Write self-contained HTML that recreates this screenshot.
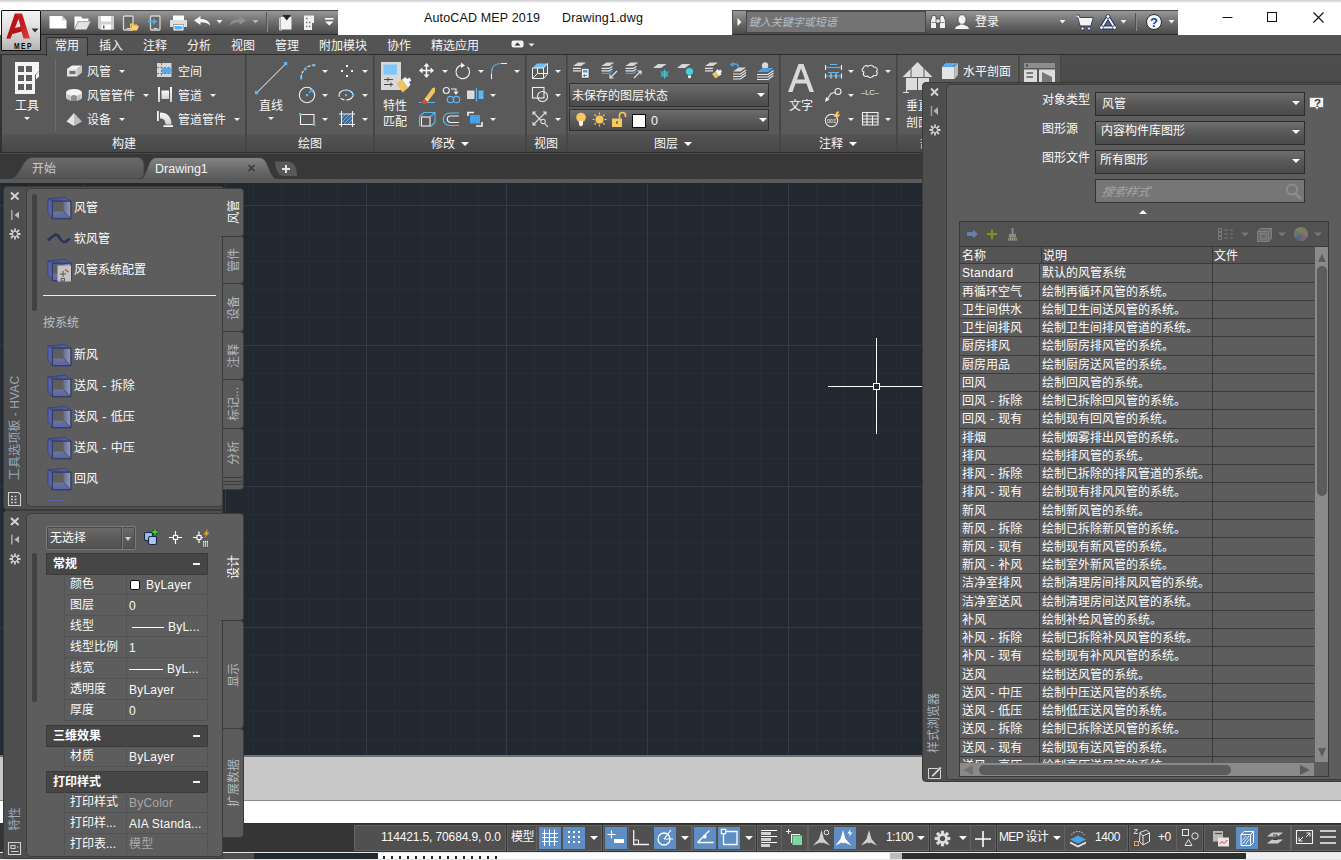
<!DOCTYPE html>
<html lang="zh-CN">
<head>
<meta charset="utf-8">
<title>AutoCAD MEP 2019 - Drawing1.dwg</title>
<style>
*{box-sizing:border-box;margin:0;padding:0}
html,body{width:1341px;height:860px;overflow:hidden;background:#fff}
body{position:relative;font-family:"Liberation Sans","Noto Sans CJK SC",sans-serif;font-size:12px;color:#f2f2f2;line-height:1}
.abs{position:absolute}
.t{position:absolute;white-space:nowrap;line-height:14px;height:14px;padding-top:1px}
svg{position:absolute;overflow:visible}
.dd{position:absolute;width:0;height:0;border-left:3px solid transparent;border-right:3px solid transparent;border-top:3px solid #e6e6e6}
.pal-out{position:absolute;background:#4e4e4e;border:1px solid #3a3a3a;border-radius:3px}
.pal-in{position:absolute;background:#5d5d5d;border:1px solid #3c3c3c;border-radius:4px}
</style>
</head>
<body>

<!-- TITLE BAR -->
<style>
#topline{left:0;top:0;width:1341px;height:3px;background:linear-gradient(#cfcfcf,#e4e4e4 50%,#fff)}
#appbtn{left:1px;top:10px;width:40px;height:41px;background:linear-gradient(#f4f4f4,#dcdcdc 50%,#b4b4b4);border:1px solid #111;border-radius:1px;z-index:5}
.qbar{position:absolute;top:10px;height:25px;background:linear-gradient(#979797,#707070 45%,#4b4b4b);border-top:1px solid #4a4a4a;border-bottom:1px solid #2c2c2c}
#title1,#title2{color:#101010;font-size:12.500px;top:10px;letter-spacing:0.150px}
</style>
<div class="abs" id="topline"></div>
<div class="qbar" style="left:41px;width:297px"></div>
<div class="qbar" style="left:732px;width:446px;border-left:1px solid #555"></div>
<div class="t" id="title1" style="left:424px">AutoCAD MEP 2019</div>
<div class="t" id="title2" style="left:562px">Drawing1.dwg</div>
<!-- window controls -->
<svg width="120" height="30" style="left:1215px;top:4px">
<path d="M7.5 13.500H17.5" stroke="#111" stroke-width="1"/>
<rect x="52.5" y="8.5" width="9" height="9" fill="none" stroke="#111" stroke-width="1"/>
<path d="M98.5 8.500L108.5 18.500M108.5 8.500L98.5 18.5" stroke="#111" stroke-width="1.1"/>
</svg>
<!-- QAT icons -->
<svg width="300" height="24" style="left:41px;top:10px">
<!-- new -->
<path d="M8.5 6H21L25.5 10.500V18.500H8.500Z" fill="#fff"/><path d="M21 6V10.500H25.500Z" fill="#d0d0d0"/>
<!-- open -->
<path d="M33.5 18.500V6.500H40L41.5 8.500H47.500V11H37Z" fill="#fff"/><path d="M33.5 19.500L37.5 11.500H49.500L45.5 19.500Z" fill="#e2e2e2"/>
<!-- save -->
<path d="M57 6H73V19.500H59L57 18Z" fill="#cfcfcf"/><rect x="60" y="6" width="10" height="5.5" fill="#fff"/><rect x="60.5" y="14.5" width="9.5" height="5" fill="#fff"/><rect x="62" y="15.5" width="1.5" height="3" fill="#555"/>
<!-- open mobile -->
<rect x="82.5" y="6" width="9.5" height="14" rx="1" fill="#646464" stroke="#d4d4d4" stroke-width="1.3"/><path d="M85.5 18.500H89.5" stroke="#d4d4d4" stroke-width="1"/>
<path d="M89 13.500H92L93 14.500H96.500V16H90.500L89 20Z" fill="#f0c050"/><path d="M89 20.500L91 16H98L96 20.500Z" fill="#f8d070"/>
<!-- save mobile -->
<rect x="109.5" y="6" width="9.5" height="14" rx="1" fill="#646464" stroke="#d4d4d4" stroke-width="1.3"/><path d="M112.5 18.500H116.5" stroke="#d4d4d4" stroke-width="1"/>
<path d="M107 10.500H112V8L116.5 11.500L112 15V12.500H107Z" fill="#4aa8ea"/>
<!-- print -->
<rect x="132" y="5.5" width="11" height="5" fill="#fff"/><path d="M129 10H146V17H143V14.500H132V17H129Z" fill="#dedede"/><rect x="132.5" y="15" width="10" height="5.5" fill="#fff"/><rect x="133.5" y="16" width="8" height="3.5" fill="#5cb0f0"/>
<!-- undo -->
<path d="M153 10.500L159.5 6V9C165 9 169 11.5 169 15.500C167 13 164 12.2 159.5 12.200V15Z" fill="#f4f4f4"/>
<path d="M175.5 10H181.500L178.5 13.500Z" fill="#f0f0f0"/>
<!-- redo -->
<path d="M205 10.500L198.5 6V9C193 9 189 11.5 189 15.500C191 13 194 12.2 198.5 12.200V15Z" fill="#8e8e8e"/>
<path d="M211.5 10H217.500L214.5 13.500Z" fill="#b4b4b4"/>
<path d="M226.5 2V22" stroke="#8a8a8a" stroke-width="1"/><path d="M225.5 2V22" stroke="#555" stroke-width="1"/>
<!-- workspace icon -->
<path d="M239.5 7H250.500V19.500H239.500Z" fill="#f2f2f2"/><path d="M238.5 8V20H241" stroke="#d0d0d0" fill="none"/><path d="M241.5 5H250L245.8 10.500Z" fill="#222"/>
<!-- prop icon -->
<path d="M263 5.500H273V13H271V20H263Z" fill="#f2f2f2"/><path d="M265 8.500H266.500M265 12.500H266.500M268 12.500H269.500M265 16.500H266.500M268 16.500H269.5" stroke="#777" stroke-width="1.3"/>
<!-- customize -->
<path d="M284 8.800H292.5" stroke="#fff" stroke-width="1.6"/><path d="M284 11.500H292.500L288.25 15.500Z" fill="#fff"/>
</svg>
<!-- infocenter -->
<div class="abs" style="left:746px;top:11px;width:180px;height:22px;background:#737373;border:1px solid #474747"></div>
<div class="t" style="left:750px;top:14px;font-size:11px;color:#b4c0cc;transform:skewX(-14deg)">键入关键字或短语</div>
<svg width="450" height="24" style="left:732px;top:10px">
<path d="M5.5 8L9.5 12L5.5 16Z" fill="#fff"/>
<!-- binoculars -->
<g fill="#f2f2f2" stroke="#3a3a3a" stroke-width="0.7"><path d="M199 9.500L200.5 5.500H203.500L204.5 9.500V18.500H198.500V11Z"/><path d="M213 9.500L211.5 5.500H208.500L207.5 9.500V18.500H213.500V11Z"/><rect x="204" y="9" width="4" height="4"/></g>
<path d="M199.5 12.500H204M208 12.500H212.5" stroke="#888" stroke-width="1"/>
<!-- user -->
<g fill="#f4f4f4" stroke="#3c3c3c" stroke-width="0.7"><path d="M222.5 19.500C222.5 16 226 15.5 228 14.500V13H232V14.500C234 15.5 237.5 16 237.5 19.500Z"/><ellipse cx="230" cy="9.5" rx="4" ry="4.8"/></g>
<path d="M327.5 10H333.500L330.5 13.500Z" fill="#f0f0f0"/>
<!-- cart -->
<path d="M344 6H346.500L349 15H358L360 8.500H347.5" fill="none" stroke="#1c2c60" stroke-width="2.6" stroke-linejoin="round"/><path d="M344 6H346.500L349 15H358L360 8.500H347.5" fill="#f4f4f4" stroke="#f4f4f4" stroke-width="1.2" stroke-linejoin="round"/>
<circle cx="350.5" cy="18.5" r="1.6" fill="#f4f4f4" stroke="#1c2c60" stroke-width="0.8"/><circle cx="357" cy="18.5" r="1.6" fill="#f4f4f4" stroke="#1c2c60" stroke-width="0.8"/>
<!-- A360 -->
<path d="M376 7L382.5 17.500H369.500Z" fill="none" stroke="#1c2c60" stroke-width="4" stroke-linejoin="round"/><path d="M376 7L382.5 17.500H369.500Z" fill="none" stroke="#f4f4f4" stroke-width="2" stroke-linejoin="round"/>
<circle cx="376" cy="6.5" r="2" fill="#f4f4f4" stroke="#1c2c60" stroke-width="0.8"/><circle cx="369.5" cy="17.5" r="2" fill="#f4f4f4" stroke="#1c2c60" stroke-width="0.8"/><circle cx="382.5" cy="17.5" r="2" fill="#f4f4f4" stroke="#1c2c60" stroke-width="0.8"/>
<path d="M388.5 10H394.500L391.5 13.500Z" fill="#f0f0f0"/>
<path d="M404.5 3V21" stroke="#8a8a8a" stroke-width="1"/><path d="M403.5 3V21" stroke="#505050" stroke-width="1"/>
<circle cx="422" cy="12" r="7.5" fill="#f8f8f8" stroke="#2a2a2a" stroke-width="1"/>
<path d="M436.5 10H442.500L439.5 13.500Z" fill="#f0f0f0"/>
</svg>
<div class="t" style="left:975px;top:14px;color:#fafafa">登录</div>
<div class="t" style="left:1150px;top:15px;color:#1c3ca8;font-weight:bold;font-size:13px;width:8px;text-align:center">?</div>
<!-- app button -->
<div class="abs" id="appbtn">
<svg width="38" height="39" style="left:0;top:0">
<defs><linearGradient id="gA" x1="0" y1="0" x2="1" y2="1"><stop offset="0" stop-color="#e02828"/><stop offset="0.5" stop-color="#c01818"/><stop offset="1" stop-color="#e04040"/></linearGradient></defs>
<path d="M13 2.500H20L28 27.500H21.500L19.5 20.500L10 23L8.5 27.500H4.500Z" fill="url(#gA)"/>
<path d="M16.5 8L13 17L18.5 15.500Z" fill="#e8e8e8"/>
<path d="M13 2.500L4.5 27.500H8.500L16.5 6Z" fill="#b01414" opacity="0.7"/>
<path d="M10 23L19.5 20.500L19 17.500L11 20Z" fill="#a01010" opacity="0.6"/>
<path d="M29.5 17.500H36.500L33 21.500Z" fill="#2a3040"/>
</svg>
<div class="t" style="left:11.5px;top:27px;color:#0a0a0a;font-weight:bold;font-size:8.4px;letter-spacing:1.9px;transform:scaleX(0.8);transform-origin:left center">MEP</div>
</div>

<!-- RIBBON -->
<style>
#tabrow{left:0;top:35px;width:1341px;height:20px;background:#545454}
#tabrow .t{top:3px;color:#f4f4f4}
#tabact{left:46px;top:37px;width:42px;height:19px;background:linear-gradient(#626262,#5a5a5a);border:1px solid #2e2e2e;border-bottom:none;border-radius:2px 2px 0 0}
#ribbon{left:0;top:54px;width:1341px;height:99px;background:linear-gradient(#4e4e4e,#454545);border-top:1px solid #2f2f2f;border-bottom:1px solid #2f2f2f;border-left:2px solid #333;overflow:hidden}
#ribbon .pn{position:absolute;top:0;height:97px;background:#5a5a5a;border-right:1px solid #444}
#ribbon .pt{position:absolute;left:0;bottom:0;width:100%;height:18px;background:linear-gradient(#545454,#474747)}
#ribbon .t{color:#f6f6f6}
#ribbon .dd{border-top-color:#f0f0f0}
#ribbon .d2{position:absolute;width:0;height:0;border-left:4px solid transparent;border-right:4px solid transparent;border-top:4px solid #fff}
#ribbon .cb{position:absolute;left:567px;width:200px;border:1px solid #303030;background:linear-gradient(#6c6c6c,#5a5a5a 50%,#4b4b4b)}
</style>
<div class="abs" id="tabrow">
<div class="t" style="left:55px">常用</div>
<div class="t" style="left:99px">插入</div>
<div class="t" style="left:143px">注释</div>
<div class="t" style="left:187px">分析</div>
<div class="t" style="left:231px">视图</div>
<div class="t" style="left:275px">管理</div>
<div class="t" style="left:319px">附加模块</div>
<div class="t" style="left:387px">协作</div>
<div class="t" style="left:431px">精选应用</div>
<svg width="30" height="21" style="left:508px;top:-1px"><rect x="3.5" y="6.5" width="12" height="7" rx="2" fill="#f2f2f2"/><path d="M6.5 11.500L9.5 8.500L12.5 11.500Z" fill="#333"/><path d="M20.5 9.500H26.500L23.5 12.500Z" fill="#f0f0f0"/></svg>
</div>
<div class="abs" id="ribbon">
<!-- coordinates inside #ribbon: x = page-2, y = page-55 -->
<div class="pn" style="left:0;width:244px"><div class="pt"></div></div>
<div class="pn" style="left:245px;width:127px"><div class="pt"></div></div>
<div class="pn" style="left:373px;width:151px"><div class="pt"></div></div>
<div class="pn" style="left:525px;width:40px"><div class="pt"></div></div>
<div class="pn" style="left:566px;width:212px"><div class="pt"></div></div>
<div class="pn" style="left:779px;width:116px"><div class="pt"></div></div>
<div class="pn" style="left:896px;width:121px"><div class="pt"></div></div>
<div class="pn" style="left:1018px;width:41px"><div class="pt"></div></div>
<!-- panel titles -->
<div class="t" style="left:110px;top:81px">构建</div>
<div class="t" style="left:296px;top:81px">绘图</div>
<div class="t" style="left:429px;top:81px">修改</div><div class="d2" style="left:459px;top:87px"></div>
<div class="t" style="left:532px;top:81px">视图</div>
<div class="t" style="left:652px;top:81px">图层</div><div class="d2" style="left:682px;top:87px"></div>
<div class="t" style="left:817px;top:81px">注释</div><div class="d2" style="left:847px;top:87px"></div>
<div class="t" style="left:918px;top:81px">剖面和立面</div>
<!-- 构建 -->
<div class="abs" style="left:53px;top:4px;width:1px;height:72px;background:#6e6e6e"></div>
<div class="t" style="left:13px;top:43px">工具</div><div class="dd" style="left:22px;top:62px"></div>
<div class="t" style="left:85px;top:9px">风管</div><div class="dd" style="left:117px;top:15px"></div>
<div class="t" style="left:85px;top:33px">风管管件</div><div class="dd" style="left:141px;top:39px"></div>
<div class="t" style="left:85px;top:57px">设备</div><div class="dd" style="left:117px;top:63px"></div>
<div class="t" style="left:176px;top:9px">空间</div>
<div class="t" style="left:176px;top:33px">管道</div><div class="dd" style="left:208px;top:39px"></div>
<div class="t" style="left:176px;top:57px">管道管件</div><div class="dd" style="left:232px;top:63px"></div>
<!-- 绘图 -->
<div class="t" style="left:257px;top:43px">直线</div><div class="dd" style="left:266px;top:62px"></div>
<div class="dd" style="left:320px;top:15px"></div><div class="dd" style="left:320px;top:39px"></div><div class="dd" style="left:320px;top:63px"></div>
<div class="dd" style="left:360px;top:15px"></div><div class="dd" style="left:360px;top:39px"></div><div class="dd" style="left:360px;top:63px"></div>
<!-- 修改 -->
<div class="t" style="left:381px;top:43px">特性</div><div class="t" style="left:381px;top:59px">匹配</div>
<div class="dd" style="left:440px;top:15px"></div><div class="dd" style="left:476px;top:15px"></div><div class="dd" style="left:512px;top:15px"></div>
<div class="dd" style="left:488px;top:39px"></div><div class="dd" style="left:488px;top:63px"></div>
<!-- 视图 -->
<div class="dd" style="left:553px;top:15px"></div><div class="dd" style="left:553px;top:39px"></div><div class="dd" style="left:553px;top:63px"></div>
<!-- 图层 -->
<div class="cb" style="top:28px;height:24px"></div>
<div class="cb" style="top:54px;height:22px"></div>
<div class="t" style="left:570px;top:33px">未保存的图层状态</div>
<div class="t" style="left:649px;top:58px;font-size:12.500px">0</div>
<div class="d2" style="left:755px;top:38px"></div><div class="d2" style="left:757px;top:63px"></div>
<!-- 注释 -->
<div class="t" style="left:787px;top:43px">文字</div>
<div class="dd" style="left:846px;top:15px"></div><div class="dd" style="left:846px;top:39px"></div><div class="dd" style="left:846px;top:63px"></div>
<div class="dd" style="left:883px;top:15px"></div><div class="dd" style="left:883px;top:63px"></div>
<div class="t" style="left:859px;top:30px;font-size:7.5px;letter-spacing:0;color:#eee;width:18px;text-align:center">–LC–</div>
<!-- 剖面 -->
<div class="t" style="left:904px;top:43px">垂直</div><div class="t" style="left:904px;top:60px">剖面</div>
<div class="t" style="left:961px;top:9px">水平剖面</div>
<svg width="1100" height="80" style="left:0;top:0">
<defs>
<linearGradient id="gW" x1="0" y1="0" x2="0" y2="1"><stop offset="0" stop-color="#fafafa"/><stop offset="1" stop-color="#cfcfcf"/></linearGradient>
</defs>
<g transform="translate(-2 -55)">
<!-- ===== 构建 ===== -->
<path d="M15 62H39V71L35 75V94H15Z" fill="#f4f4f4"/><path d="M36 74.500L39 71.500V76.500L36 79.500Z" fill="#f4f4f4"/>
<path d="M18 66h6v6h-6zM26 66h6v6h-6zM18 75h6v6h-6zM26 75h6v6h-6zM18 84h6v6h-6zM26 84h6v6h-6z" fill="#5c5c5c"/>
<!-- duct -->
<path d="M67 69L72 65.500H82L77 69Z" fill="#f2f2f2"/><path d="M77 69L82 65.500V72.500L77 76.500Z" fill="#c4c4c4"/><rect x="67" y="69" width="10" height="7.5" fill="#dedede"/><rect x="69.5" y="71" width="6" height="3" fill="#6e6e6e"/>
<!-- duct fitting -->
<path d="M66 92.500V97.500A8 3.5 0 0 0 82 97.500V92.500Z" fill="#cdcdcd"/><ellipse cx="74" cy="92.5" rx="8" ry="3.5" fill="#f4f4f4"/>
<path d="M71 101V97.500A3 2.5 0 0 1 77 97.500V101Z" fill="#8c8c8c"/><path d="M69 94.500V100M79 94.500V100" stroke="#aaa" stroke-width="0.8"/>
<!-- equipment -->
<path d="M74 113L66.5 121.500L74 126Z" fill="#e4e4e4"/><path d="M74 113L82 121.500L74 126Z" fill="#bcbcbc"/>
<!-- space -->
<rect x="157" y="63" width="14.5" height="14" fill="#d6d6d6"/><rect x="162" y="68" width="9.5" height="5.5" fill="#5aa8e6"/>
<path d="M161.5 63V77M157 67.500H171.500M157 73.500H171.5" stroke="#2a8ae0" stroke-width="1" stroke-dasharray="2 1.5" fill="none"/>
<!-- pipe -->
<rect x="158" y="87" width="2" height="15" fill="url(#gW)"/><rect x="170" y="87" width="2" height="15" fill="url(#gW)"/><rect x="161.5" y="90.5" width="7.5" height="8.5" fill="url(#gW)"/>
<!-- pipe fitting -->
<rect x="157" y="111" width="1.8" height="10" fill="#f4f4f4"/><rect x="163.5" y="125.2" width="9.5" height="1.8" fill="#f4f4f4"/>
<path d="M160 112.500C167.5 112.5 171.5 117 171.5 124.500H165.500C165.5 120.5 163.5 118.5 160 118.500Z" fill="url(#gW)"/>
<!-- ===== 绘图 ===== -->
<path d="M257.5 92L285 64.5" stroke="#f4f4f4" stroke-width="1"/><rect x="255" y="91" width="3.2" height="3.2" fill="#5cb8f4"/><rect x="284" y="62" width="3.2" height="3.2" fill="#5cb8f4"/>
<path d="M301 78C301.5 71 306 65.5 314 65" fill="none" stroke="#f0f0f0" stroke-width="1.1" stroke-dasharray="3 1.5"/>
<rect x="300" y="77" width="2.4" height="2.4" fill="#5cb8f4"/><rect x="304" y="68" width="2.4" height="2.4" fill="#5cb8f4"/><rect x="313" y="64" width="2.4" height="2.4" fill="#5cb8f4"/>
<circle cx="307" cy="95" r="7.7" fill="none" stroke="#f0f0f0" stroke-width="1.1"/><rect x="306" y="94" width="2.2" height="2.2" fill="#5cb8f4"/><path d="M309 93L312.5 89.500M309.5 89.500H312.500V92.5" stroke="#5cb8f4" stroke-width="1.1" fill="none"/>
<path d="M300.5 114.500H314V124.500H300.500Z" fill="none" stroke="#f0f0f0" stroke-width="1.1"/><rect x="299" y="113" width="2.4" height="2.4" fill="#5cb8f4"/><rect x="313" y="123.5" width="2.4" height="2.4" fill="#5cb8f4"/>
<path d="M346 65h2v2h-2zM341 70h2v2h-2zM351 70h2v2h-2zM346 75h2v2h-2z" fill="#f4f4f4"/>
<ellipse cx="346" cy="95" rx="7" ry="5" fill="none" stroke="#f0f0f0" stroke-width="1.1" stroke-dasharray="9 2 4 2 30"/><rect x="345" y="89" width="2.2" height="2.2" fill="#5cb8f4"/><rect x="345" y="94" width="2.2" height="2.2" fill="#5cb8f4"/><rect x="352" y="94" width="2.2" height="2.2" fill="#5cb8f4"/>
<rect x="342" y="114" width="10" height="10" fill="#3c6c94"/><path d="M342 118L346 114M342 122L350 114M344 124L352 116M348 124L352 120" stroke="#5cb8f4" stroke-width="1"/>
<path d="M341.5 111V127M352.5 111V127M339 114H355M339 124.500H355" stroke="#f0f0f0" stroke-width="1.1"/>
<!-- ===== 修改 ===== -->
<rect x="381" y="62" width="20" height="28" fill="#d8d8d8"/><rect x="383.5" y="64.5" width="13.5" height="10" fill="#7cc6fa"/>
<path d="M384 79.500H393M384 84.500H393M388 77.500V81.500M391 82.500V86.5" stroke="#4a4a4a" stroke-width="1.1"/>
<path d="M396.5 83L402 79.500L408 88L402.5 92.500Z" fill="#f0c45c"/><path d="M402 79.500L405.5 77L407 79L409.5 77.500L411.5 80.500L409 82L410.5 84.500L408 88Z" fill="#f4f4f4"/>
<!-- move -->
<path d="M426.5 63L429.5 66.500H427.300V69.700H430.500V67.500L434 70.500L430.5 73.500V71.300H427.300V74.500H429.500L426.5 78L423.5 74.500H425.700V71.300H422.500V73.500L419 70.500L422.5 67.500V69.700H425.700V66.500H423.500Z" fill="#f6f6f6"/>
<!-- rotate -->
<path d="M467.5 67A6.8 6.8 0 1 1 461.5 65.2" fill="none" stroke="#f2f2f2" stroke-width="1.2"/><path d="M461 62.500L465 65.500L461 68Z" fill="#f2f2f2"/>
<!-- fillet -->
<path d="M491.5 73C491.5 67 495 63.5 500.5 63.5" fill="none" stroke="#5cb8f4" stroke-width="1.2"/><path d="M491.5 73.500V79M501 63.500H507" stroke="#f0f0f0" stroke-width="1.1"/>
<!-- erase -->
<path d="M424.5 99L432.5 88L435 87.500L435 92L427.5 102Z" fill="#f0c45c"/><path d="M424.5 99L427.5 102L425.5 103.500A2.2 2.2 0 0 1 422.5 100.500Z" fill="#e84848"/><path d="M425.3 98L428.3 101" stroke="#fff" stroke-width="1"/>
<path d="M419 102.500H421.500M427 102.500H435" stroke="#5cb8f4" stroke-width="1"/>
<!-- copy -->
<circle cx="446.3" cy="90.5" r="3" fill="none" stroke="#f0f0f0" stroke-width="1.1"/><path d="M451 89H456V93.500M454 91.500L456 94L458 91.5" fill="none" stroke="#f0f0f0" stroke-width="1.1"/>
<circle cx="450.5" cy="99.5" r="3.2" fill="none" stroke="#5cb8f4" stroke-width="1.2"/><circle cx="456.5" cy="99.5" r="3.2" fill="none" stroke="#5cb8f4" stroke-width="1.2"/>
<!-- mirror -->
<rect x="467" y="90.5" width="7.5" height="8.5" fill="#dcdcdc"/><path d="M476.5 88V101.5" stroke="#5cb8f4" stroke-width="1.1"/><rect x="478.5" y="90.5" width="5" height="8.5" fill="#5cb8f4"/>
<!-- 3d box -->
<path d="M419.5 116.500L424 112.500H435V122.500L430.5 126.500M430.5 116.500L435 112.500M419.5 116.500V126.5" fill="none" stroke="#5cb8f4" stroke-width="1.1"/><rect x="421.5" y="117" width="8.5" height="9" fill="none" stroke="#f0f0f0" stroke-width="1.1"/>
<!-- offset -->
<path d="M459 113H449.500A6 6 0 0 0 449.5 125.500H459" fill="none" stroke="#5cb8f4" stroke-width="1.2"/><path d="M459 116H450.500A3.2 3.2 0 0 0 450.5 122.500H459" fill="none" stroke="#f0f0f0" stroke-width="1.2"/>
<!-- draw order -->
<rect x="470" y="115" width="10" height="8.5" fill="#4aa0e4"/><path d="M468 116V112.500H474M482 122V126H476" fill="none" stroke="#f4f4f4" stroke-width="1.6"/>
<!-- ===== 视图 ===== -->
<path d="M532.5 68L537 63.500H547.500L543.5 68Z" fill="#6cc0f8"/><path d="M532.5 68H543.500V78.500H532.500ZM543.5 68L547.5 63.500V74L543.5 78.500M532.5 78.500L537.5 73.500H547M537.5 73.500V68" fill="none" stroke="#f0f0f0" stroke-width="1"/>
<rect x="532.5" y="87.5" width="11.5" height="10.5" fill="none" stroke="#f0f0f0" stroke-width="1.1"/><circle cx="542.5" cy="96.5" r="5" fill="none" stroke="#f0f0f0" stroke-width="1.1"/>
<path d="M533 112L541 120.500M546 112L533 125" stroke="#d8d8d8" stroke-width="1.2"/><path d="M532.5 111.500H536.500L532.5 115.500ZM546.5 111.500H542.500L546.5 115.500ZM532.5 125.500H536.500L532.5 121.500Z" fill="#d8d8d8"/><circle cx="543" cy="121.5" r="2.3" fill="none" stroke="#f4f4f4" stroke-width="1"/><path d="M544.7 123.500L548 127" stroke="#e0c8a0" stroke-width="1.2"/>
<!-- ===== 图层 icons ===== -->
<g id="lyr3"><path d="M0 3.500L5 0H13L8 3.500Z" fill="#d6d6d6"/><path d="M0 6H8M0 8.500H8" stroke="#e8e8e8" stroke-width="1.2"/></g>
<use href="#lyr3" x="573" y="62.4"/><rect x="581.5" y="68.5" width="7.5" height="9.5" fill="#f2f2f2" stroke="#444" stroke-width="0.6"/><rect x="583" y="70" width="4.5" height="2.5" fill="#4aa0e4"/><path d="M583.5 75.500H587M583.5 75.500L585 74.300M583.5 75.500L585 76.7" stroke="#444" stroke-width="0.7" fill="none"/>
<g id="lyr4"><path d="M0 3.500L5 0H13L8 3.500Z" fill="#d6d6d6"/><path d="M0 6L8 6L11 3.800M0 8.500H8L11 6.3" stroke="#e8e8e8" stroke-width="1.1" fill="none"/><path d="M0 11H8L11 8.8" stroke="#4aa0e4" stroke-width="1.2" fill="none"/></g>
<use href="#lyr4" x="601.4" y="62.4"/><path d="M617 71L610 78M610 74.500V78H613.5" stroke="#e4e4e4" stroke-width="1.2" fill="none"/>
<use href="#lyr4" x="625.4" y="62.4"/><path d="M634 78L641 71M641 74.500V71H637.5" stroke="#e4e4e4" stroke-width="1.2" fill="none"/>
<path d="M653 68L658 64H666.500L661 68Z" fill="#d6d6d6"/><g stroke="#40c8d8" stroke-width="1" fill="none"><path d="M664.5 69.500V78.500M660.6 71.700L668.4 76.300M660.6 76.300L668.4 71.7"/><circle cx="664.5" cy="74" r="2.7"/></g>
<path d="M677 68L682 64H690.500L685 68Z" fill="#d6d6d6"/><circle cx="689.5" cy="71.5" r="3.6" fill="#48d0dc"/><path d="M688 75.500H691V77.500L689.5 78.500L688 77.500Z" fill="#f4f4f4"/>
<use href="#lyr3" x="705" y="62.4"/><path d="M712 74L715.5 71.500L719 76L715.5 78.500Z" fill="#f0c45c"/><path d="M715.5 71.500L717.5 69L719 70.500L720.5 69.500L722 72L720.5 73L721.5 74.500L719 76Z" fill="#f4f4f4"/>
<path d="M733 71.500L738.5 67.500H746L740.5 71.500Z" fill="#d6d6d6"/><path d="M733 74H740.500L746 70M733 76.500H740.500L746 72.500M733 79H740.500L746 75" stroke="#e8e8e8" stroke-width="1.1" fill="none"/><path d="M738.5 67.500C738.5 64.5 736 63.5 733 64" fill="none" stroke="#4aa0e4" stroke-width="1.6"/><path d="M729.5 64.500L733.5 62V67Z" fill="#4aa0e4"/>
<circle cx="765" cy="65.5" r="3.2" fill="#d8d8d8"/><path d="M757 72L762.5 68H773.500L768 72Z" fill="#4aa0e4"/><path d="M757 74.500H768L773.5 70.500M757 77H768L773.5 73M757 79.500H768L773.5 75.5" stroke="#e8e8e8" stroke-width="1.1" fill="none"/>
<!-- layer combo icons -->
<circle cx="581" cy="117.5" r="4.8" fill="#f8c860"/><path d="M579 121H583V125L581 126.500L579 125Z" fill="#f4f4f4"/>
<circle cx="599.5" cy="119.5" r="4" fill="#f8c860"/><path d="M599.5 112.500V114.500M599.5 124.500V126.500M592.5 119.500H594.500M604.5 119.500H606.500M594.5 114.500L596 116M603 123L604.5 124.500M594.5 124.500L596 123M603 116L604.5 114.5" stroke="#f8c860" stroke-width="1.1"/>
<rect x="612" y="118.5" width="10" height="8.5" fill="#f8c860"/><path d="M619.5 118.500V115.500A3 3 0 0 1 625.5 115.500V117" fill="none" stroke="#f8c860" stroke-width="1.6"/><rect x="616.3" y="121" width="1.4" height="3" fill="#5a5a5a"/>
<rect x="632.5" y="114.5" width="13" height="13" fill="#fff" stroke="#0a0a0a" stroke-width="1"/>
<!-- ===== 注释 ===== -->
<path d="M798.5 64H803.500L814 92H809.500L806.5 83.500H795.500L792.5 92H788ZM801 68.500L797 79.500H805Z" fill="#d8d8d8"/>
<path d="M825.5 65V70M841.5 65V70M825.5 73.500V78.500M841.5 73.500V78.500M831 73.500V78.500M836 73.500V78.5" stroke="#f0f0f0" stroke-width="1.1"/><path d="M826 67.500H841M826 76H841M830 64.500H837M828 72.500H839" stroke="#5cb8f4" stroke-width="1.1"/>
<circle cx="838" cy="91.5" r="3" fill="none" stroke="#f0f0f0" stroke-width="1.1"/><path d="M835 92.500L831 93.500L826.5 100.5" fill="none" stroke="#f0f0f0" stroke-width="1.1"/><path d="M825 102L826 97L829.5 99.500Z" fill="#f0f0f0"/>
<circle cx="831.5" cy="120.5" r="6.2" fill="none" stroke="#f0f0f0" stroke-width="1.1"/><text x="831.6" y="122.6" font-size="5.6" text-anchor="middle" fill="#f0f0f0" font-family="Liberation Sans, sans-serif">001</text><path d="M837 111.500L833.5 116.500H836.500L835 120L840.5 114.500H837.500L839.5 111.500Z" fill="#f8c860"/>
<path d="M864 72C861.5 71.5 861.5 68.5 863.5 68C863.5 65.5 867 65 868 66.500C869.5 64.5 873 65 873.5 67C876.5 66.5 878.5 69.5 876.5 71.500C878.5 73.5 876.5 76.5 873.5 75.500C872.5 78 868.5 78 867.5 76C865 77.5 862 75 864 72Z" fill="none" stroke="#f0f0f0" stroke-width="1.1"/>
<path d="M862.5 112.500H878V125H862.500ZM862.5 116H878M862.5 119H878M862.5 122H878M867 112.500V125M872.5 116V125" fill="none" stroke="#f0f0f0" stroke-width="1.1"/>
<!-- ===== 剖面 ===== -->
<path d="M917.5 62L932.5 77H902.500Z" fill="#dcdcdc"/><rect x="906" y="77" width="23" height="13" fill="#dcdcdc"/><path d="M911 68V77M924 68V77M917.5 77V90M906 77.500H929" stroke="#5a5a5a" stroke-width="1"/><path d="M906.5 90V93M903 92.500H909" stroke="#dcdcdc" stroke-width="1.2"/>
<path d="M942 67L946 63H958L954.5 67Z" fill="#4aa0e4"/><path d="M943.5 66L946.5 63.500M947 66L950 63.500M950.5 66L953.5 63.5" stroke="#9cd0f8" stroke-width="0.8"/><rect x="942" y="67" width="12.5" height="12" fill="#e4e4e4"/><path d="M954.5 67L958 63V75L954.5 79Z" fill="#bdbdbd"/>
<rect x="1024" y="63" width="31" height="5" fill="#8e8e8e"/><rect x="1026" y="64.5" width="2" height="2" fill="#444"/><rect x="1024" y="69.5" width="13" height="14" fill="#dcdcdc"/><path d="M1026.5 73H1033M1026.5 77H1033" stroke="#5a5a5a" stroke-width="1.3"/><path d="M1039 69.500H1055V84H1039Z" fill="#dcdcdc"/><path d="M1042 72L1052 77V84H1042Z" fill="#777"/>
</g>
</svg>

</div>
<div class="abs" id="tabact"></div>
<div class="t" style="left:55px;top:38px;color:#fafafa">常用</div>

<!-- DOCUMENT TABS -->
<style>
#doctabs{left:0;top:153px;width:1341px;height:30px;background:#383838}
#doctabs .bar{position:absolute;left:0;top:26px;width:1341px;height:4px;background:#595959}
</style>
<div class="abs" id="doctabs">
<div class="abs" style="left:0;top:0;width:1341px;height:1px;background:#494949"></div>
<svg width="320" height="30" style="left:0;top:0">
<defs>
<linearGradient id="gtab1" x1="0" y1="0" x2="0" y2="1"><stop offset="0" stop-color="#6a6a6a"/><stop offset="1" stop-color="#545454"/></linearGradient>
<linearGradient id="gtab2" x1="0" y1="0" x2="0" y2="1"><stop offset="0" stop-color="#858585"/><stop offset="0.5" stop-color="#6c6c6c"/><stop offset="1" stop-color="#595959"/></linearGradient>
</defs>
<path d="M10 26C20 26 22 4.5 32 4.5H137C143 4.5 144 9 144 14V26Z" fill="url(#gtab1)" stroke="#474747" stroke-width="1"/>
<path d="M138 26.5C148 26.5 146 4.5 156 4.5H260C270 4.5 268 26.5 280 26.5Z" fill="url(#gtab2)" stroke="#3c3c3c" stroke-width="1.2"/>
<path d="M275 8.5H288C295 8.5 297 17 297 23H284C277 23 275 14 275 8.5Z" fill="#595959"/>
<path d="M282 16H290M286 12V20" stroke="#e4e4e4" stroke-width="2" fill="none"/>
<path d="M248.5 12L254.5 18M254.5 12L248.5 18" stroke="#3a3a3a" stroke-width="1.6" fill="none"/>
</svg>
<div class="bar"></div>
<div class="t" style="left:32px;top:8px;color:#c4ccd4">开始</div>
<div class="t" style="left:155px;top:8px;color:#f4f4f4;font-size:12.5px">Drawing1</div>
</div>

<!-- DRAWING AREA -->
<style>
#draw{left:0;top:183px;width:1341px;height:573px;background:#212830;overflow:hidden}
#band1{left:0;top:755px;width:1341px;height:46px;background:#c8c8c8;border-top:2px solid #707070;border-bottom:1px solid #8c8c8c}
#band2{left:0;top:801px;width:1341px;height:22px;background:#fff}
</style>
<div class="abs" id="draw">
<svg width="1341" height="573" style="left:0;top:0">
<path d="M0.5 0V573M28.5 0V573M56.5 0V573M112.5 0V573M140.5 0V573M168.5 0V573M197.5 0V573M253.5 0V573M281.5 0V573M309.5 0V573M337.5 0V573M394.5 0V573M422.5 0V573M450.5 0V573M478.5 0V573M534.5 0V573M563.5 0V573M591.5 0V573M619.5 0V573M675.5 0V573M703.5 0V573M732.5 0V573M760.5 0V573M816.5 0V573M844.5 0V573M872.5 0V573M901.5 0V573M957.5 0V573M985.5 0V573M1013.5 0V573M1041.5 0V573M1098.5 0V573M1126.5 0V573M1154.5 0V573M1182.5 0V573M1238.5 0V573M1267.5 0V573M1295.5 0V573M1323.5 0V573M0 50.5H1341M0 78.5H1341M0 106.5H1341M0 134.5H1341M0 190.5H1341M0 219.5H1341M0 247.5H1341M0 275.5H1341M0 331.5H1341M0 359.5H1341M0 388.5H1341M0 416.5H1341M0 472.5H1341M0 500.5H1341M0 528.5H1341M0 557.5H1341" stroke="#262d37" stroke-width="1" fill="none"/>
<path d="M84.5 0V573M225.5 0V573M366.5 0V573M506.5 0V573M647.5 0V573M788.5 0V573M929.5 0V573M1070.5 0V573M1210.5 0V573M0 22.5H1341M0 162.5H1341M0 303.5H1341M0 444.5H1341" stroke="#333a49" stroke-width="1" fill="none"/>
<path d="M828 203.5H922M876.5 155V251" stroke="#ffffff" stroke-width="1" fill="none"/>
<rect x="873.5" y="200.5" width="6" height="6" fill="#212830" stroke="#ffffff" stroke-width="1"/>
</svg>
</div>
<div class="abs" id="band1"></div>
<div class="abs" id="band2"></div>

<!-- STATUS BAR -->
<style>
#status{left:0;top:823px;width:1341px;height:29px;background:#353535;border-top:1px solid #2e2e2e}
#status .fr{position:absolute;top:1px;height:26px;background:#505050;border:1px solid #636363}
#status .bl{position:absolute;top:3px;width:22px;height:22px;background:#5e8ec4}
#status .sp{position:absolute;top:2px;width:1px;height:24px;background:#636363}
#status .t{top:5px;color:#fafafa}
#status .dd{top:12px;border-left-width:4px;border-right-width:4px;border-top-width:4px;border-top-color:#fff}
#under{left:0;top:852px;width:1341px;height:8px;background:#e6e6e6}
</style>
<div class="abs" id="status">
<div class="fr" style="left:354px;width:152px"></div>
<div class="fr" style="left:507px;width:95px"></div>
<div class="fr" style="left:603px;width:89px"></div>
<div class="fr" style="left:692px;width:64px"></div>
<div class="fr" style="left:757px;width:51px"></div>
<div class="fr" style="left:808px;width:121px"></div>
<div class="fr" style="left:930px;width:66px"></div>
<div class="fr" style="left:997px;width:131px"></div>
<div class="fr" style="left:1129px;width:74px"></div>
<div class="fr" style="left:1204px;width:87px"></div>
<div class="fr" style="left:1291px;width:52px"></div>
<div class="sp" style="left:536px"></div>
<div class="sp" style="left:628px"></div>
<div class="sp" style="left:781px"></div>
<div class="sp" style="left:970px"></div>
<div class="sp" style="left:1064px"></div>
<div class="sp" style="left:1176px"></div>
<div class="bl" style="left:539px"></div>
<div class="bl" style="left:563px"></div>
<div class="bl" style="left:605px"></div>
<div class="bl" style="left:654px"></div>
<div class="bl" style="left:694px"></div>
<div class="bl" style="left:718px"></div>
<div class="bl" style="left:834px"></div>
<div class="bl" style="left:1236px"></div>
<div class="t" style="left:381px;letter-spacing:-0.13px">114421.5, 70684.9, 0.0</div>
<div class="t" style="left:511px;letter-spacing:-0.5px">模型</div>
<div class="t" style="left:886px;letter-spacing:-0.6px">1:100</div>
<div class="t" style="left:999px;letter-spacing:-0.65px">MEP 设计</div>
<div class="t" style="left:1095px;letter-spacing:-0.4px">1400</div>
<div class="t" style="left:1158px;letter-spacing:-0.4px">+0</div>
<div class="dd" style="left:590px"></div>
<div class="dd" style="left:681px"></div>
<div class="dd" style="left:745px"></div>
<div class="dd" style="left:917px"></div>
<div class="dd" style="left:959px"></div>
<div class="dd" style="left:1053px"></div>
<svg width="1341" height="30" style="left:0;top:-2px">
<g fill="none" stroke="#fff" stroke-width="1.3">
<!-- grid -->
<path d="M544.5 7.5V24M549.5 7.5V24M554.5 7.5V24M542 11.500H558M542 15.500H558M542 19.500H558" stroke-width="1.1"/>
<!-- dyn input -->
<path d="M607.5 12.5H615.5M611.5 8.5V16.5" stroke-width="1.2"/>
<!-- ortho -->
<path d="M633.7 8V22.5H649" stroke="#f0f0f0"/><path d="M634 18H638.5V22.5" stroke="#f0f0f0" stroke-width="1"/>
<!-- polar -->
<circle cx="664" cy="17" r="6"/><path d="M664 17L671 8M664 17H673" stroke-width="1.2"/>
<!-- otrack -->
<path d="M697.5 20.5L709.5 8.5M697.5 20.5H713.5"/>
<!-- osnap -->
<path d="M723.5 9.5H737V22.5H723.5Z"/>
<!-- plus -->
<path d="M975 17H991M983 9V25" stroke-width="1.6"/>
<!-- fullscreen -->
<path d="M1296.5 8.5H1312.5V21.5H1296.5Z" stroke="#f0f0f0" stroke-width="1.1"/><path d="M1299 19L1303 15M1299 15.5V19H1302.5M1310 11L1306 15M1310 14.5V11H1306.5" stroke="#f0f0f0" stroke-width="1"/>
<!-- hamburger -->
<path d="M1320 9H1336M1320 15H1336M1320 21H1336" stroke-width="1.6" stroke="#f4f4f4"/>
</g>
<g fill="#fff">
<rect x="703" y="13" width="3.4" height="3.4"/>
<rect x="721.3" y="7.3" width="4.4" height="4.4" fill="#5e8ec4" stroke="#fff" stroke-width="1.1"/>
<rect x="614" y="17" width="10" height="4"/>
<!-- snap dots -->
<path d="M568 9h2v2h-2zM573 9h2v2h-2zM578 9h2v2h-2zM568 14h2v2h-2zM573 14h2v2h-2zM578 14h2v2h-2zM568 19h2v2h-2zM573 19h2v2h-2zM578 19h2v2h-2z"/>
</g>
<!-- lineweight -->
<path d="M761 8.5H777M761 14.5H777M761 20.5H777" stroke="#fff" stroke-width="1"/>
<path d="M761 10H771V13H761zM761 16H771V19H761zM761 22H770V25H761z" fill="#d2d2d2"/>
<!-- selection cycling -->
<path d="M786 9.5H791M788.5 7V12M791 12.5H800M791.5 12V21" stroke="#f0f0f0" stroke-width="1" fill="none"/>
<rect x="792.5" y="13.5" width="9.5" height="9.5" fill="#7fd6a0"/>
<!-- annotation scale icons -->
<g fill="#cfcfcf">
<path d="M821.5 8L824 17L830 23.5L822.8 20.5L821.5 21.500L820.2 20.500L813 23.500L819 17Z"/>
<path d="M869 8L871.5 17L877 23.500L870.3 20.500L869 21.500L867.7 20.500L861 23.500L866.5 17Z"/>
</g>
<circle cx="826.5" cy="10.5" r="2.3" fill="none" stroke="#e8e8e8" stroke-width="1"/>
<path d="M843 8L845.5 17L851.5 23.500L844.3 20.500L843 21.500L841.7 20.500L835.5 23.500L840.5 17Z" fill="#fff"/>
<path d="M850.5 7L847.5 11.500H850L848.5 15L852.5 10.500H850Z" fill="#fff"/>
<!-- gear -->
<g transform="translate(942.5 16.5)" fill="#dcdcdc">
<circle r="5.3" /><g id="teeth"><rect x="-1.6" y="-7.8" width="3.2" height="15.6"/><rect x="-7.8" y="-1.6" width="15.6" height="3.2"/></g><g transform="rotate(45)"><rect x="-1.6" y="-7.8" width="3.2" height="15.6"/><rect x="-7.8" y="-1.6" width="15.6" height="3.2"/></g><circle r="2.6" fill="#505050"/>
</g>
<!-- layer key icon -->
<path d="M1070 17.500L1078 13.500L1086 17.500L1078 21.500Z" fill="#4aa3e6"/>
<path d="M1070 19.500L1078 23.500L1086 19.500V21.500L1078 25.500L1070 21.500Z" fill="#e6e6e6"/>
<path d="M1071.5 13A7 5.5 0 0 1 1084.5 13" fill="none" stroke="#e0e0e0" stroke-width="1" stroke-dasharray="1.5 1.3"/>
<!-- elevation icon -->
<path d="M1140 10.500L1146.5 8L1149.5 11V19.500L1143 23L1139.5 19.500Z M1139.8 10.800L1143 13.800L1149.5 11M1143 13.800V23" fill="none" stroke="#e4e4e4" stroke-width="1"/>
<path d="M1134 7.500H1137.500L1134 11.500H1137.8" fill="none" stroke="#e4e4e4" stroke-width="0.9"/>
<rect x="1134.5" y="19.5" width="4" height="4" fill="none" stroke="#f0a060" stroke-width="1"/>
<!-- shapes icon -->
<rect x="1182.5" y="7.5" width="6" height="6" fill="none" stroke="#e6e6e6" stroke-width="1"/>
<circle cx="1195" cy="14" r="3.2" fill="none" stroke="#e6e6e6" stroke-width="1"/>
<path d="M1188.5 17.500L1192 23.500H1185Z" fill="none" stroke="#e6e6e6" stroke-width="1"/>
<!-- isolate icon group -->
<path d="M1213 9H1223V19.500H1213Z" fill="#b9b9b9"/><path d="M1215 11.500H1222" stroke="#505050" stroke-width="1.2"/>
<rect x="1218" y="15.5" width="11" height="9" fill="#e6e6e6"/><path d="M1219.5 22L1222 19.500L1224 21.500L1227.5 18" stroke="#e03030" stroke-width="1" fill="none"/>
<!-- 3d hatch cube -->
<path d="M1241 12.500H1250.500V23.500H1241ZM1241 12.500L1244 9.500H1253.500L1250.5 12.500M1253.5 9.500V20.500L1250.5 23.5" fill="none" stroke="#fff" stroke-width="1"/>
<path d="M1242.5 22L1249 14M1242.5 18.500L1246 14M1245.5 22L1249.5 17" stroke="#fff" stroke-width="0.8"/>
<!-- surface hatch -->
<path d="M1267 14.500L1272 10.500H1283L1278 14.500ZM1267 21.500L1272 17.500H1283L1278 21.500Z" fill="#c9c9c9"/>
<path d="M1273 13H1277V17.500H1273" fill="none" stroke="#3a3a3a" stroke-width="1"/>
</svg>
</div>
<div class="abs" id="under">
<div class="abs" style="left:0;top:1px;width:254px;height:6px;background:#4e4e4e"></div>
<div class="abs" style="left:254px;top:1px;width:124px;height:6px;background:#222830"></div>
<div class="abs" style="left:378px;top:1px;width:512px;height:6px;background:#fff"></div>
<div class="abs" style="left:383px;top:4px;width:118px;height:3px;background:repeating-linear-gradient(90deg,#222 0 2px,#fff 2px 8px)"></div>
<div class="abs" style="left:890px;top:1px;width:12px;height:6px;background:#bdbdbd"></div>
<div class="abs" style="left:902px;top:1px;width:344px;height:6px;background:#2e2e2e"></div>
<div class="abs" style="left:1246px;top:1px;width:95px;height:6px;background:#f0f0f0"></div>
</div>

<!-- TOOL PALETTE -->
<style>
#tp .vt{position:absolute;left:210px;width:48px;height:14px;line-height:14px;text-align:center;transform:rotate(-90deg);transform-origin:center;white-space:nowrap;color:#aeb8c2}
#tp .tab{position:absolute;left:221px;width:23px;background:#5b5b5b;border:1px solid #3c3c3c;border-left-color:#3c3c3c;border-radius:0 4px 4px 0}
#tp .it{color:#fcfcfc;left:74px}
</style>
<div id="tp">
<div class="pal-out" style="left:3px;top:186px;width:220px;height:324px;border-radius:4px 0 0 4px"></div>
<!-- stacked tab edges -->
<div class="tab" style="top:440px;height:50px"></div>
<div class="tab" style="top:440px;height:45px"></div>
<div class="tab" style="top:440px;height:42px"></div>
<div class="tab" style="top:428px;height:50px"></div>
<div class="tab" style="top:379px;height:50px"></div>
<div class="tab" style="top:331px;height:49px"></div>
<div class="tab" style="top:283px;height:49px"></div>
<div class="tab" style="top:235px;height:49px"></div>
<div class="pal-in" style="left:26px;top:188px;width:197px;height:319px;border-radius:5px 0 4px 5px"></div>
<div class="abs" style="left:221px;top:188px;width:23px;height:49px;background:#5d5d5d;border:1px solid #3c3c3c;border-left:none;border-radius:0 4px 4px 0"></div>
<div class="abs" style="left:220px;top:189px;width:4px;height:47px;background:#5d5d5d"></div>
<div class="vt" style="top:205px;color:#fcfcfc">风管</div>
<div class="vt" style="top:253px">管件</div>
<div class="vt" style="top:301px">设备</div>
<div class="vt" style="top:349px">注释</div>
<div class="vt" style="top:397px">标记...</div>
<div class="vt" style="top:446px">分析</div>
<!-- left strip -->
<svg width="24" height="324" style="left:3px;top:186px">
<path d="M8 6.500L15.5 13.500M15.5 6.500L8 13.5" stroke="#d2d2d2" stroke-width="2" fill="none"/>
<path d="M8.8 24V34" stroke="#a4a4a4" stroke-width="1.6"/><path d="M16 25.500L11.5 29L16 32.500Z" fill="#bcbcbc"/>
<g transform="translate(12 48)" stroke="#d0d0d0" stroke-width="1.8" fill="none"><path d="M0 -5.500V5.500M-5.5 0H5.500M-4 -4L4 4M4 -4L-4 4"/><circle r="1.6" fill="#4b4b4b" stroke="#4b4b4b" stroke-width="1"/></g>
<path d="M5.5 306.500H15.500L17.5 308.500V319.500H5.500Z" fill="none" stroke="#d0d0d0" stroke-width="1.1"/>
<path d="M8 310.500H10M11.5 310.500H13.500M8 313.500H10M11.5 313.500H13.500M8 316.500H10M11.5 316.500H13.5" stroke="#d0d0d0" stroke-width="1.6"/>
</svg>
<div class="t" style="left:-39px;top:421px;width:106px;text-align:center;transform:rotate(-90deg);transform-origin:center;color:#9aa8b8;letter-spacing:0.1px">工具选项板 - HVAC</div>
<!-- scrollbar -->
<div class="abs" style="left:32px;top:194px;width:5px;height:117px;background:#414141;border-radius:3px"></div>
<!-- icons -->
<svg width="200" height="320" style="left:0;top:186px">
<defs>
<linearGradient id="gdA" x1="0" y1="0" x2="1" y2="0"><stop offset="0" stop-color="#3f4c94"/><stop offset="1" stop-color="#5563aa"/></linearGradient>
<linearGradient id="gdB" x1="0" y1="0" x2="0" y2="1"><stop offset="0" stop-color="#70758c"/><stop offset="1" stop-color="#5666b2"/></linearGradient>
<linearGradient id="gdC" x1="0" y1="0" x2="1" y2="0"><stop offset="0" stop-color="#6a6e82"/><stop offset="1" stop-color="#8b98cc"/></linearGradient>
<g id="duct">
<path d="M0 1.800L17 0.400L23 4.100H4.300Z" fill="url(#gdA)"/>
<path d="M0 1.800L4.3 4.100V21.800L0 16Z" fill="#5563ab"/>
<path d="M5 5H15.400V14.500H5Z" fill="#5e5e5e"/>
<path d="M15.4 5L22.3 4.600V21L15.4 14.500Z" fill="url(#gdC)"/>
<path d="M5 14.500H15.400L22.3 21H5Z" fill="url(#gdB)"/>
<path d="M15.4 14.500L22.3 21" stroke="#3a4270" stroke-width="0.7"/>
<path d="M4.3 4.100H23V21.800H4.300Z" fill="none" stroke="#2c3362" stroke-width="1"/>
<path d="M0 1.800L17 0.400L23 4.100M0 1.800V16L4.3 21.800M0 1.800L4.3 4.1" fill="none" stroke="#353d70" stroke-width="0.7"/>
</g>
</defs>
<use href="#duct" x="48" y="11"/>
<path d="M48 54.500L50.5 52L55.5 48.500L58 49.500L61 54L63.5 56L66 55.500L70 52.5" fill="none" stroke="#2d3354" stroke-width="2.6" stroke-linejoin="round"/>
<use href="#duct" x="48" y="73"/>
<rect x="57.5" y="79.5" width="13.5" height="16" fill="#c4c4c4"/><path d="M60 88H66M63 85V91M61 92.500H64.500V95H61Z" stroke="#555" stroke-width="1" fill="none"/><path d="M65 83.500L68.5 86" stroke="#c04040" stroke-width="1.2"/>
<use href="#duct" x="48" y="158"/>
<use href="#duct" x="48" y="189"/>
<use href="#duct" x="48" y="220"/>
<use href="#duct" x="48" y="251"/>
<use href="#duct" x="48" y="282"/>
<path d="M48 314.500H66" stroke="#5664a8" stroke-width="1"/>
</svg>
<div class="t it" style="top:200px">风管</div>
<div class="t it" style="top:231px">软风管</div>
<div class="t it" style="top:262px">风管系统配置</div>
<div class="abs" style="left:43px;top:295px;width:173px;height:1px;background:#ececec"></div>
<div class="t" style="left:43px;top:315px;color:#b8c0c8">按系统</div>
<div class="t it" style="top:347px">新风</div>
<div class="t it" style="top:378px;word-spacing:1px">送风 - 拆除</div>
<div class="t it" style="top:409px;word-spacing:1px">送风 - 低压</div>
<div class="t it" style="top:440px;word-spacing:1px">送风 - 中压</div>
<div class="t it" style="top:471px">回风</div>
</div>

<!-- PROPERTIES PALETTE -->
<style>
#pp .vt{position:absolute;left:198px;width:72px;height:14px;line-height:14px;text-align:center;transform:rotate(-90deg);transform-origin:center;white-space:nowrap;color:#aeb8c2}
#pp .tab{position:absolute;left:221px;width:23px;background:#5b5b5b;border:1px solid #3c3c3c;border-radius:0 4px 4px 0}
#pp .hd{position:absolute;left:46px;width:162px;height:22px;background:#464646;border:1px solid #3a3a3a}
#pp .hd b{position:absolute;left:6px;top:3px;line-height:14px;color:#fff;font-weight:bold}
#pp .hd i{position:absolute;left:146px;top:9px;width:7px;height:2px;background:#f4f4f4}
#pp .row{position:absolute;left:64px;width:144px;height:21px;border:1px solid #535353;border-top:none;white-space:nowrap}
#pp .row .l{position:absolute;left:5px;top:3px;line-height:14px;color:#fafafa}
#pp .row .v{position:absolute;left:64px;top:4px;line-height:14px;color:#fafafa;letter-spacing:0.2px}
#pp .row u{position:absolute;left:61px;top:0;width:1px;height:20px;background:#535353}
</style>
<div id="pp">
<div class="pal-out" style="left:3px;top:510px;width:220px;height:349px;border-radius:4px 0 0 4px"></div>
<div class="tab" style="top:728px;height:110px"></div>
<div class="tab" style="top:620px;height:109px"></div>
<div class="pal-in" style="left:26px;top:513px;width:197px;height:344px;border-radius:5px 0 4px 5px"></div>
<div class="abs" style="left:221px;top:513px;width:23px;height:108px;background:#5d5d5d;border:1px solid #3c3c3c;border-left:none;border-radius:0 4px 4px 0"></div>
<div class="abs" style="left:220px;top:514px;width:4px;height:106px;background:#5d5d5d"></div>
<div class="vt" style="top:560px;color:#fcfcfc">设计</div>
<div class="vt" style="top:668px">显示</div>
<div class="vt" style="top:776px">扩展数据</div>
<svg width="24" height="349" style="left:3px;top:510px">
<path d="M8 8L15.5 15M15.5 8L8 15" stroke="#d2d2d2" stroke-width="2" fill="none"/>
<path d="M8.8 24.500V34.5" stroke="#a4a4a4" stroke-width="1.6"/><path d="M16 26L11.5 29.500L16 33Z" fill="#bcbcbc"/>
<g transform="translate(12 49)" stroke="#d0d0d0" stroke-width="1.8" fill="none"><path d="M0 -5.500V5.500M-5.5 0H5.500M-4 -4L4 4M4 -4L-4 4"/><circle r="1.6" fill="#4b4b4b" stroke="#4b4b4b" stroke-width="1"/></g>
<path d="M5.5 332.500H17.500V344.500H5.500Z" fill="none" stroke="#d0d0d0" stroke-width="1.1"/>
<path d="M8 335.500H12V338.500H8ZM14 337H15.500M8 341.500H15.5" stroke="#d0d0d0" stroke-width="1.1" fill="none"/>
</svg>
<div class="t" style="left:-5px;top:812px;width:38px;text-align:center;transform:rotate(-90deg);transform-origin:center;color:#9aa8b8">特性</div>
<div class="abs" style="left:32px;top:553px;width:5px;height:149px;background:#414141;border-radius:3px"></div>
<!-- selector -->
<div class="abs" style="left:46px;top:526px;width:90px;height:24px;border:1px solid #7c7c7c;border-radius:2px;background:linear-gradient(#6c6c6c,#5a5a5a 50%,#525252);box-shadow:inset 0 0 0 1px #4a4a4a"></div>
<div class="abs" style="left:121px;top:527px;width:1px;height:22px;background:#474747;box-shadow:1px 0 0 #777"></div>
<div class="t" style="left:50px;top:530px;color:#fafafa">无选择</div>
<div class="dd" style="left:125px;top:537px;border-top-color:#d4d4d4;border-left-width:3.500px;border-right-width:3.500px;border-top-width:4px"></div>
<svg width="70" height="22" style="left:142px;top:527px">
<rect x="2.5" y="5.5" width="8" height="8" rx="1.5" fill="#9fc0ea" stroke="#1c2c48" stroke-width="1.2"/>
<rect x="6.5" y="9.5" width="8" height="8" rx="1.5" fill="#a9c8ee" stroke="#1c2c48" stroke-width="1.2"/>
<path d="M13 2V8M10 5H16" stroke="#1a5a1a" stroke-width="3.4"/><path d="M13 2.500V7.500M10.5 5H15.5" stroke="#35d035" stroke-width="1.8"/>
<path d="M27 10.500H31.500M35.5 10.500H40M33.5 4V8.500M33.5 12.500V17" stroke="#fff" stroke-width="1.2"/><rect x="31.5" y="8.5" width="4" height="4" fill="none" stroke="#fff" stroke-width="1.1"/>
<path d="M51 10.500H55M59 10.500H61M57 4.500V8.500M57 12.500V16" stroke="#fff" stroke-width="1.2"/><rect x="55" y="8.5" width="4" height="4" fill="none" stroke="#fff" stroke-width="1.1"/>
<rect x="60.5" y="13.5" width="6" height="6.5" fill="#f4f4f4" stroke="#333" stroke-width="0.6"/><path d="M60.5 16H66.500M60.5 18H66.500M62.5 13.500V20M64.5 13.500V20" stroke="#444" stroke-width="0.6"/>
<path d="M65.5 2L61.5 7.500H64L62.5 11L67.5 5.500H65Z" fill="#f0a020"/>
</svg>
<!-- groups -->
<div class="hd" style="top:553px"><b>常规</b><i></i></div>
<div class="row" style="top:574px"><span class="l">颜色</span><u></u><span class="v" style="left:81px">ByLayer</span><span class="abs" style="left:65px;top:6px;width:10px;height:10px;background:#fff;border:1px solid #111;border-radius:2px"></span></div>
<div class="row" style="top:595px"><span class="l">图层</span><u></u><span class="v">0</span></div>
<div class="row" style="top:616px"><span class="l">线型</span><u></u><span class="v" style="left:103px">ByL...</span><span class="abs" style="left:67px;top:11px;width:32px;height:1px;background:#fff"></span></div>
<div class="row" style="top:637px"><span class="l">线型比例</span><u></u><span class="v">1</span></div>
<div class="row" style="top:658px"><span class="l">线宽</span><u></u><span class="v" style="left:102px">ByL...</span><span class="abs" style="left:64px;top:11px;width:34px;height:1px;background:#fff"></span></div>
<div class="row" style="top:679px"><span class="l">透明度</span><u></u><span class="v">ByLayer</span></div>
<div class="row" style="top:700px"><span class="l">厚度</span><u></u><span class="v">0</span></div>
<div class="hd" style="top:725px"><b>三维效果</b><i></i></div>
<div class="row" style="top:746px"><span class="l">材质</span><u></u><span class="v">ByLayer</span></div>
<div class="hd" style="top:771px"><b>打印样式</b><i></i></div>
<div class="row" style="top:792px"><span class="l">打印样式</span><u></u><span class="v" style="color:#a8a8a8">ByColor</span></div>
<div class="row" style="top:813px"><span class="l">打印样...</span><u></u><span class="v">AIA Standa...</span></div>
<div class="row" style="top:834px;border-bottom:none"><span class="l">打印表...</span><u></u><span class="v" style="color:#a8a8a8;top:3px">模型</span></div>
</div>

<!-- STYLE BROWSER PALETTE -->
<style>
#sb-out{left:922px;top:82px;width:425px;height:700px;border-radius:4px 0 0 4px}
#sb-in{left:946px;top:84px;width:400px;height:696px;border-radius:5px 0 0 4px}
#sb .lbl{color:#fafafa}
.combo{position:absolute;height:24px;border:1px solid #2c2c2c;background:linear-gradient(#6f6f6f,#5a5a5a 45%,#4a4a4a);}
.combo .t{left:5px;top:1px;color:#fafafa}
.combo .dd{right:4px;top:8px;border-left-width:4px;border-right-width:4px;border-top-width:4px;border-top-color:#fff}
#sb-tb{left:959px;top:221px;width:370px;height:26px;background:#525252;border:1px solid #3a3a3a}
#sb-tbl{left:959px;top:246px;width:370px;height:531px;border:1px solid #3a3a3a;background:#5d5d5d;overflow:hidden}
#sb-tbl .hd{position:absolute;left:0;top:0;width:355px;height:17px;background:#545454;border-bottom:1px solid #3a3a3a}
#sb-tbl .r{position:absolute;left:0;width:354px;border-top:1px solid #3a3a3a;white-space:nowrap}
#sb-tbl .r span{position:absolute;top:1px;line-height:17px;color:#fcfcfc}
#sb-tbl .c1{left:2px;word-spacing:0.8px}
#sb-tbl .c2{left:82px}
#sb-tbl .v{position:absolute;top:0;width:1px;height:516px;background:#3a3a3a}
</style>
<div id="sb">
<div class="pal-out" id="sb-out"></div>
<div class="pal-in" id="sb-in"></div>
<svg width="24" height="700" style="left:923px;top:82px">
<path d="M8 6.500L15 13.500M15 6.500L8 13.5" stroke="#d2d2d2" stroke-width="2" fill="none"/>
<path d="M8.5 24V34" stroke="#9a9a9a" stroke-width="1.6"/><path d="M15 25L10.5 29L15 33Z" fill="#b4b4b4"/>
<g transform="translate(12 48)" stroke="#d0d0d0" stroke-width="1.8" fill="none"><path d="M0 -5.500V5.500M-5.5 0H5.500M-4 -4L4 4M4 -4L-4 4"/><circle r="1.6" fill="#4b4b4b" stroke="#4b4b4b" stroke-width="1"/></g>
<!-- bottom icon -->
<path d="M5.5 686.500H17.500V696.500H5.500Z" fill="none" stroke="#d4d4d4" stroke-width="1"/>
<path d="M8 694L17 684.500L19 686L10 695Z" fill="#d4d4d4" stroke="#4b4b4b" stroke-width="0.6"/>
</svg>
<div class="t" style="left:903px;top:716px;width:60px;transform:rotate(-90deg);transform-origin:center;color:#aab4c0;text-align:center">样式浏览器</div>

<div class="t lbl" style="left:1042px;top:92px">对象类型</div>
<div class="t lbl" style="left:1042px;top:121px">图形源</div>
<div class="t lbl" style="left:1042px;top:150px">图形文件</div>
<div class="combo" style="left:1095px;top:92px;width:210px"><div class="t" style="left:6px;top:3px">风管</div><div class="dd"></div></div>
<div class="combo" style="left:1095px;top:121px;width:210px"><div class="t">内容构件库图形</div><div class="dd"></div></div>
<div class="combo" style="left:1095px;top:150px;width:210px"><div class="t" style="left:4px">所有图形</div><div class="dd"></div></div>
<div class="abs" style="left:1095px;top:179px;width:210px;height:24px;border:1px solid #323232;background:#767676"></div>
<div class="t" style="left:1102px;top:184px;color:#a4a4a4;font-style:italic;transform:skewX(-12deg)">搜索样式</div>
<svg width="20" height="20" style="left:1284px;top:182px"><circle cx="8" cy="7.5" r="5" fill="none" stroke="#8e8e8e" stroke-width="1.8"/><path d="M11.5 11.500L16.5 16.5" stroke="#8e8e8e" stroke-width="2.4" stroke-linecap="round"/></svg>
<!-- help bubble -->
<svg width="18" height="18" style="left:1308px;top:96px"><path d="M1.5 1.500H15.500V11.500H10.500L9 14.500L7.5 11.500H1.500Z" fill="#f2f2f2" stroke="#6a6a6a" stroke-width="0.8"/></svg>
<div class="t" style="left:1314px;top:95px;color:#3a3a3a;font-weight:bold;font-size:11.5px">?</div>
<div class="abs" style="left:1139px;top:210px;width:0;height:0;border-left:4px solid transparent;border-right:4px solid transparent;border-bottom:4px solid #fff"></div>

<div class="abs" id="sb-tb"></div>
<svg width="370" height="26" style="left:959px;top:221px">
<!-- arrow -->
<path d="M7.5 10.500H13.500V7.500L19.5 13L13.5 18.500V15.500H7.500Z" fill="#6d7f9f" stroke="#3f4a60" stroke-width="0.8"/>
<!-- plus -->
<path d="M31.5 8H34.500V11.500H38.500V14.500H34.500V18.500H31.500V14.500H27.500V11.500H31.500Z" fill="#7c8c3c" stroke="#4c5a20" stroke-width="0.8"/>
<!-- brush -->
<path d="M52.5 7H54.500V13H57V16H50V13H52.500Z" fill="#8a8a8a"/><path d="M49.5 16.500H57.500L58 19.500H49Z" fill="#a89a80"/><path d="M50.5 17V19.500M52.5 17V19.500M54.5 17V19.500M56.5 17V19.5" stroke="#6a6256" stroke-width="0.7"/>
<!-- list icon (disabled) -->
<g stroke="#767676" stroke-width="1" fill="none"><rect x="259.5" y="7.5" width="3" height="3"/><rect x="259.5" y="11.5" width="3" height="3"/><rect x="259.5" y="15.5" width="3" height="3"/><path d="M265 9H269M271 9H274M265 13H269M271 13H274M265 17H269M271 17H274" stroke-width="1.2"/></g>
<path d="M282 11.500H290L286 15.500Z" fill="#787878"/>
<!-- cube -->
<path d="M298.5 10.500H309.500V20.500H298.500Z M298.5 10.500L301.5 7.500H312.500V17.500L309.5 20.500M309.5 10.500L312.5 7.5" fill="#6a6a6a" stroke="#808080" stroke-width="1"/><rect x="301.5" y="12.5" width="5.5" height="5.5" fill="none" stroke="#8a8a8a" stroke-width="0.8"/>
<path d="M319 11.500H327L323 15.500Z" fill="#787878"/>
<!-- color wheel -->
<g transform="translate(342 13)" opacity="0.8"><circle r="7" fill="#6e6e6e"/><path d="M0 0L0 -7A7 7 0 0 1 6.060 -3.500Z" fill="#7a8a6c"/><path d="M0 0L6.060 -3.500A7 7 0 0 1 6.060 3.500Z" fill="#9a7a6c"/><path d="M0 0L6.060 3.500A7 7 0 0 1 0 7Z" fill="#7e6a84"/><path d="M0 0L0 7A7 7 0 0 1 -6.060 3.500Z" fill="#5f6688"/><path d="M0 0L-6.060 3.500A7 7 0 0 1 -6.060 -3.500Z" fill="#667c86"/><path d="M0 0L-6.060 -3.500A7 7 0 0 1 0 -7Z" fill="#8a8a64"/></g>
<path d="M355 11.500H363L359 15.500Z" fill="#787878"/>
</svg>

<div class="abs" id="sb-tbl">
<div class="hd"></div>
<div class="t" style="left:2px;top:0;line-height:16px;color:#fcfcfc">名称</div>
<div class="t" style="left:83px;top:0;line-height:16px;color:#fcfcfc">说明</div>
<div class="t" style="left:254px;top:0;line-height:16px;color:#fcfcfc">文件</div>
<div class="r" style="top:16px;height:19px"><span class="c1" style="letter-spacing:0.35px">Standard</span><span class="c2">默认的风管系统</span></div>
<div class="r" style="top:35px;height:18px"><span class="c1">再循环空气</span><span class="c2">绘制再循环风管的系统。</span></div>
<div class="r" style="top:53px;height:18px"><span class="c1">卫生间供水</span><span class="c2">绘制卫生间送风管的系统。</span></div>
<div class="r" style="top:71px;height:18px"><span class="c1">卫生间排风</span><span class="c2">绘制卫生间排风管道的系统。</span></div>
<div class="r" style="top:89px;height:19px"><span class="c1">厨房排风</span><span class="c2">绘制厨房排风管的系统。</span></div>
<div class="r" style="top:108px;height:18px"><span class="c1">厨房用品</span><span class="c2">绘制厨房送风管的系统。</span></div>
<div class="r" style="top:126px;height:18px"><span class="c1">回风</span><span class="c2">绘制回风管的系统。</span></div>
<div class="r" style="top:144px;height:18px"><span class="c1">回风 - 拆除</span><span class="c2">绘制已拆除回风管的系统。</span></div>
<div class="r" style="top:162px;height:19px"><span class="c1">回风 - 现有</span><span class="c2">绘制现有回风管的系统。</span></div>
<div class="r" style="top:181px;height:18px"><span class="c1">排烟</span><span class="c2">绘制烟雾排出风管的系统。</span></div>
<div class="r" style="top:199px;height:18px"><span class="c1">排风</span><span class="c2">绘制排风管的系统。</span></div>
<div class="r" style="top:217px;height:18px"><span class="c1">排风 - 拆除</span><span class="c2">绘制已拆除的排风管道的系统。</span></div>
<div class="r" style="top:235px;height:19px"><span class="c1">排风 - 现有</span><span class="c2">绘制现有排风风管的系统。</span></div>
<div class="r" style="top:254px;height:18px"><span class="c1">新风</span><span class="c2">绘制新风管的系统。</span></div>
<div class="r" style="top:272px;height:18px"><span class="c1">新风 - 拆除</span><span class="c2">绘制已拆除新风管的系统。</span></div>
<div class="r" style="top:290px;height:18px"><span class="c1">新风 - 现有</span><span class="c2">绘制现有新风管的系统。</span></div>
<div class="r" style="top:308px;height:18px"><span class="c1">新风 - 补风</span><span class="c2">绘制室外新风管的系统。</span></div>
<div class="r" style="top:326px;height:19px"><span class="c1">洁净室排风</span><span class="c2">绘制清理房间排风风管的系统。</span></div>
<div class="r" style="top:345px;height:18px"><span class="c1">洁净室送风</span><span class="c2">绘制清理房间送风管的系统。</span></div>
<div class="r" style="top:363px;height:18px"><span class="c1">补风</span><span class="c2">绘制补给风管的系统。</span></div>
<div class="r" style="top:381px;height:18px"><span class="c1">补风 - 拆除</span><span class="c2">绘制已拆除补风风管的系统。</span></div>
<div class="r" style="top:399px;height:19px"><span class="c1">补风 - 现有</span><span class="c2">绘制现有补风风管的系统。</span></div>
<div class="r" style="top:418px;height:18px"><span class="c1">送风</span><span class="c2">绘制送风管的系统。</span></div>
<div class="r" style="top:436px;height:18px"><span class="c1">送风 - 中压</span><span class="c2">绘制中压送风管的系统。</span></div>
<div class="r" style="top:454px;height:18px"><span class="c1">送风 - 低压</span><span class="c2">绘制低压送风管的系统。</span></div>
<div class="r" style="top:472px;height:19px"><span class="c1">送风 - 拆除</span><span class="c2">绘制已拆除送风管的系统。</span></div>
<div class="r" style="top:491px;height:18px"><span class="c1">送风 - 现有</span><span class="c2">绘制现有送风管的系统。</span></div>
<div class="r" style="top:509px;height:18px"><span class="c1">送风 - 高压</span><span class="c2">绘制高压送风管的系统。</span></div>
<div class="v" style="left:79px;top:17px"></div><div class="v" style="left:81px;height:17px"></div>
<div class="v" style="left:252px"></div>
<!-- vertical scrollbar -->
<div class="abs" style="left:355px;top:0;width:14px;height:515px;background:#8a8a8a"></div>
<div class="abs" style="left:357px;top:19px;width:10px;height:230px;background:#5c5c5c;border-radius:5px"></div>
<div class="abs" style="left:358px;top:7px;width:0;height:0;border-left:4px solid transparent;border-right:4px solid transparent;border-bottom:8px solid #5c5c5c"></div>
<div class="abs" style="left:358px;top:501px;width:0;height:0;border-left:4px solid transparent;border-right:4px solid transparent;border-top:9px solid #5c5c5c"></div>
<!-- horizontal scrollbar -->
<div class="abs" style="left:0;top:516px;width:354px;height:13px;background:#8a8a8a"></div>
<div class="abs" style="left:354px;top:516px;width:15px;height:13px;background:#5d5d5d"></div>
<div class="abs" style="left:19px;top:518px;width:252px;height:10px;background:#5c5c5c;border-radius:5px"></div>
<div class="abs" style="left:3px;top:518px;width:0;height:0;border-top:5px solid transparent;border-bottom:5px solid transparent;border-right:10px solid #727272"></div>
<div class="abs" style="left:340px;top:518px;width:0;height:0;border-top:5px solid transparent;border-bottom:5px solid transparent;border-left:10px solid #5c5c5c"></div>
</div>
</div>

</body>
</html>
